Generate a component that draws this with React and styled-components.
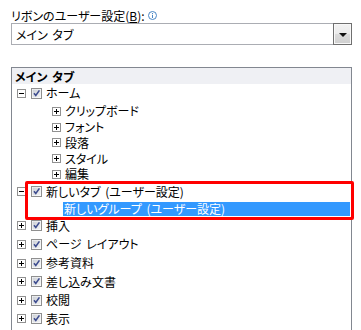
import React from "react";
import styled, { createGlobalStyle } from "styled-components";

const Global = createGlobalStyle`
  html, body {
    margin: 0;
    background: #fff;
  }
  body {
    font-family: "Noto Sans CJK JP", "Noto Sans", sans-serif;
    font-size: 12px;
    color: #000;
    font-feature-settings: "palt";
    word-spacing: 2px;
  }
`;

const Page = styled.div`
  padding: 7px 9px 0 11px;
  height: 323px;
  overflow: hidden;
`;

const LabelRow = styled.div`
  display: flex;
  align-items: center;
  gap: 3px;
  height: 16px;
  u {
    text-decoration: underline;
    text-underline-offset: 1px;
  }
`;

const Select = styled.div`
  box-sizing: border-box;
  height: 22px;
  border: 1px solid #abadb3;
  display: flex;
  align-items: center;
  justify-content: space-between;
  padding-left: 4px;
`;

const DropButton = styled.div`
  box-sizing: border-box;
  width: 19px;
  height: 22px;
  margin-right: -1px;
  border: 1px solid #6f6f6f;
  box-shadow: inset 0 0 0 1px #f8f8f8;
  background: linear-gradient(#f2f2f2, #ebebeb 50%, #dcdcdc 51%, #cfcfcf);
  display: flex;
  align-items: center;
  justify-content: center;
  &::after {
    content: "";
    border-left: 4px solid transparent;
    border-right: 4px solid transparent;
    border-top: 4px solid #111;
    margin-top: 1px;
  }
`;

const Tree = styled.div`
  margin-top: 22px;
  border: 1px solid #828790;
  border-bottom: none;
  height: 300px;
`;

const Header = styled.div`
  height: 16px;
  background: #eff0f4;
  padding-left: 3px;
  font-weight: bold;
  display: flex;
  align-items: center;
`;

const Row = styled.div`
  height: ${(p) => (p.$child ? "15.75px" : "18.6px")};
  display: flex;
  align-items: center;
  padding-left: ${(p) => (p.$child ? "40px" : "5px")};
  white-space: nowrap;
`;

const Children = styled.div`
  padding-top: 1px;
`;

const Label = styled.span`
  margin-left: ${(p) => p.$gap ?? 3}px;
  line-height: 14px;
  padding: 0 2px 0 1px;
  ${(p) =>
    p.$selected &&
    `
    background: #3399ff;
    color: #fff;
    flex: 1;
    margin-right: 1px;
  `}
`;

const Marked = styled.div`
  position: relative;
  &::before {
    content: "";
    position: absolute;
    left: 13px;
    right: -3px;
    top: -1px;
    bottom: -3px;
    border: 3px solid #ff0000;
    border-radius: 2px;
    pointer-events: none;
    z-index: 2;
  }
`;

const Expander = ({ open }) => (
  <svg width="9" height="9" viewBox="0 0 9 9" style={{ flexShrink: 0 }}>
    <rect x="0.5" y="0.5" width="8" height="8" fill="#fff" stroke="#919191" />
    <path d="M2 4.5h5" stroke="#000" />
    {!open && <path d="M4.5 2v5" stroke="#000" />}
  </svg>
);

const Check = () => (
  <svg width="11" height="11" viewBox="0 0 11 11" style={{ marginLeft: 5, flexShrink: 0 }}>
    <defs>
      <linearGradient id="cb" x1="0" y1="0" x2="1" y2="1">
        <stop offset="0" stopColor="#cbcfd5" />
        <stop offset="1" stopColor="#f4f4f4" />
      </linearGradient>
    </defs>
    <rect x="0.5" y="0.5" width="10" height="10" fill="#fff" stroke="#8f8f8f" />
    <rect x="1.5" y="1.5" width="8" height="8" fill="url(#cb)" />
    <path d="M3 5.2l1.8 2.3L8.4 2.4" fill="none" stroke="#3d4c8f" strokeWidth="1.6" />
  </svg>
);

const InfoIcon = () => (
  <svg width="9" height="9" viewBox="0 0 9 9">
    <circle cx="4.5" cy="4.5" r="4" fill="#fff" stroke="#4a86c5" />
    <rect x="4" y="2" width="1" height="1" fill="#4a86c5" />
    <rect x="4" y="3.8" width="1" height="3.2" fill="#4a86c5" />
  </svg>
);

const topTabs = ["挿入", "ページ レイアウト", "参考資料", "差し込み文書", "校閲", "表示"];
const homeGroups = ["クリップボード", "フォント", "段落", "スタイル", "編集"];

export default function App() {
  return (
    <Page>
      <Global />
      <LabelRow>
        <span>
          リボンのユーザー設定(<u>B</u>):
        </span>
        <InfoIcon />
      </LabelRow>
      <Select>
        <span>メイン タブ</span>
        <DropButton />
      </Select>
      <Tree>
        <Header>メイン タブ</Header>
        <Row>
          <Expander open />
          <Check />
          <Label>ホーム</Label>
        </Row>
        <Children>
          {homeGroups.map((g) => (
            <Row $child key={g}>
              <Expander />
              <Label $gap={3}>{g}</Label>
            </Row>
          ))}
        </Children>
        <Marked>
          <Row>
            <Expander open />
            <Check />
            <Label>新しいタブ (ユーザー設定)</Label>
          </Row>
          <Row $child style={{ height: "15.65px", paddingLeft: 51 }}>
            <Label $selected $gap={0}>
              新しいグループ (ユーザー設定)
            </Label>
          </Row>
        </Marked>
        {topTabs.map((t) => (
          <Row key={t}>
            <Expander />
            <Check />
            <Label>{t}</Label>
          </Row>
        ))}
      </Tree>
    </Page>
  );
}
